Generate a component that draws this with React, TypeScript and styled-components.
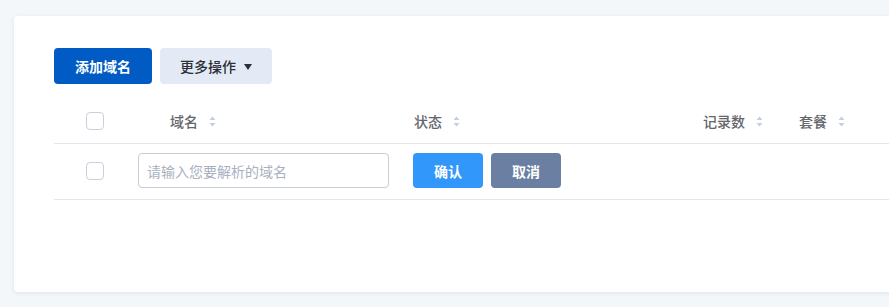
import React from "react";
import styled, { createGlobalStyle } from "styled-components";

const Global = createGlobalStyle`
  html, body { margin: 0; padding: 0; background: #f4f7f9; overflow: hidden; }
  body { font-family: "Noto Sans CJK SC", "Noto Sans", sans-serif; }
  * { box-sizing: border-box; }
`;

const Page = styled.div`
  width: 889px;
  height: 307px;
  padding: 16px 0 0 14px;
  overflow: hidden;
`;

const Card = styled.div`
  width: 1000px;
  height: 276px;
  background: #fff;
  border-radius: 4px;
  box-shadow: 0 1px 4px rgba(180, 190, 210, 0.35);
  padding: 32px 0 0 40px;
`;

const Toolbar = styled.div`
  display: flex;
  gap: 8px;
  margin-bottom: 15px;
`;

const Btn = styled.button<{ $variant: "primary" | "light" | "confirm" | "cancel" }>`
  height: ${(p) => (p.$variant === "confirm" || p.$variant === "cancel" ? 35 : 36)}px;
  border: none;
  border-radius: 4px;
  padding: 0 20px;
  font-family: inherit;
  font-size: 14px;
  font-weight: ${(p) => (p.$variant === "light" ? 500 : 700)};
  display: inline-flex;
  align-items: center;
  justify-content: center;
  gap: 8px;
  cursor: pointer;
  background: ${(p) =>
    p.$variant === "primary"
      ? "#005bc4"
      : p.$variant === "light"
      ? "#e4eaf5"
      : p.$variant === "confirm"
      ? "#3197fa"
      : "#6a7fa1"};
  color: ${(p) => (p.$variant === "light" ? "#2b2f38" : "#fff")};
  width: ${(p) => (p.$variant === "primary" ? "98px" : p.$variant === "light" ? "112px" : "70px")};
`;

const Caret = styled.span`
  width: 0;
  height: 0;
  border-left: 4.5px solid transparent;
  border-right: 4.5px solid transparent;
  border-top: 6px solid #2b2f38;
  margin-top: 1px;
`;

const Row = styled.div<{ $head?: boolean }>`
  display: grid;
  grid-template-columns: 84px 275px 290px 96px 1fr;
  align-items: center;
  height: ${(p) => (p.$head ? 45 : 56)}px;
  padding-bottom: ${(p) => (p.$head ? 0 : 2)}px;
  border-bottom: 1px solid #e3e6ec;
`;

const Cell = styled.div<{ $pl?: number }>`
  display: flex;
  align-items: center;
  gap: 8px;
  padding-left: ${(p) => p.$pl ?? 0}px;
`;

const Check = styled.span`
  width: 18px;
  height: 18px;
  border: 1px solid #c9cfdc;
  border-radius: 4px;
  background: #fff;
`;

const HeadText = styled.span`
  font-size: 14px;
  font-weight: 500;
  color: #64666c;
`;

const SortWrap = styled.span`
  display: inline-flex;
  margin-left: 3px;
`;

const Sort = () => (
  <SortWrap>
    <svg width="7" height="11" viewBox="0 0 7 11">
      <path d="M3.5 0.5 L6.5 4 H0.5 Z" fill="#c3cde2" />
      <path d="M3.5 10.5 L6.5 7 H0.5 Z" fill="#c3cde2" />
    </svg>
  </SortWrap>
);

const Input = styled.input`
  width: 251px;
  height: 35px;
  border: 1px solid #c8cdd9;
  border-radius: 4px;
  padding: 0 8px;
  font-family: inherit;
  font-size: 14px;
  color: #333;
  outline: none;
  &::placeholder { color: #a9b0bf; }
`;

export default function App() {
  return (
    <>
      <Global />
      <Page>
        <Card>
          <Toolbar>
            <Btn $variant="primary">添加域名</Btn>
            <Btn $variant="light">
              更多操作
              <Caret />
            </Btn>
          </Toolbar>
          <Row $head>
            <Cell $pl={32}>
              <Check />
            </Cell>
            <Cell $pl={32}>
              <HeadText>域名</HeadText>
              <Sort />
            </Cell>
            <Cell $pl={1}>
              <HeadText>状态</HeadText>
              <Sort />
            </Cell>
            <Cell>
              <HeadText>记录数</HeadText>
              <Sort />
            </Cell>
            <Cell>
              <HeadText>套餐</HeadText>
              <Sort />
            </Cell>
          </Row>
          <Row>
            <Cell $pl={32}>
              <Check />
            </Cell>
            <Cell>
              <Input placeholder="请输入您要解析的域名" />
            </Cell>
            <Cell>
              <Btn $variant="confirm">确认</Btn>
              <Btn $variant="cancel">取消</Btn>
            </Cell>
            <Cell />
            <Cell />
          </Row>
        </Card>
      </Page>
    </>
  );
}
